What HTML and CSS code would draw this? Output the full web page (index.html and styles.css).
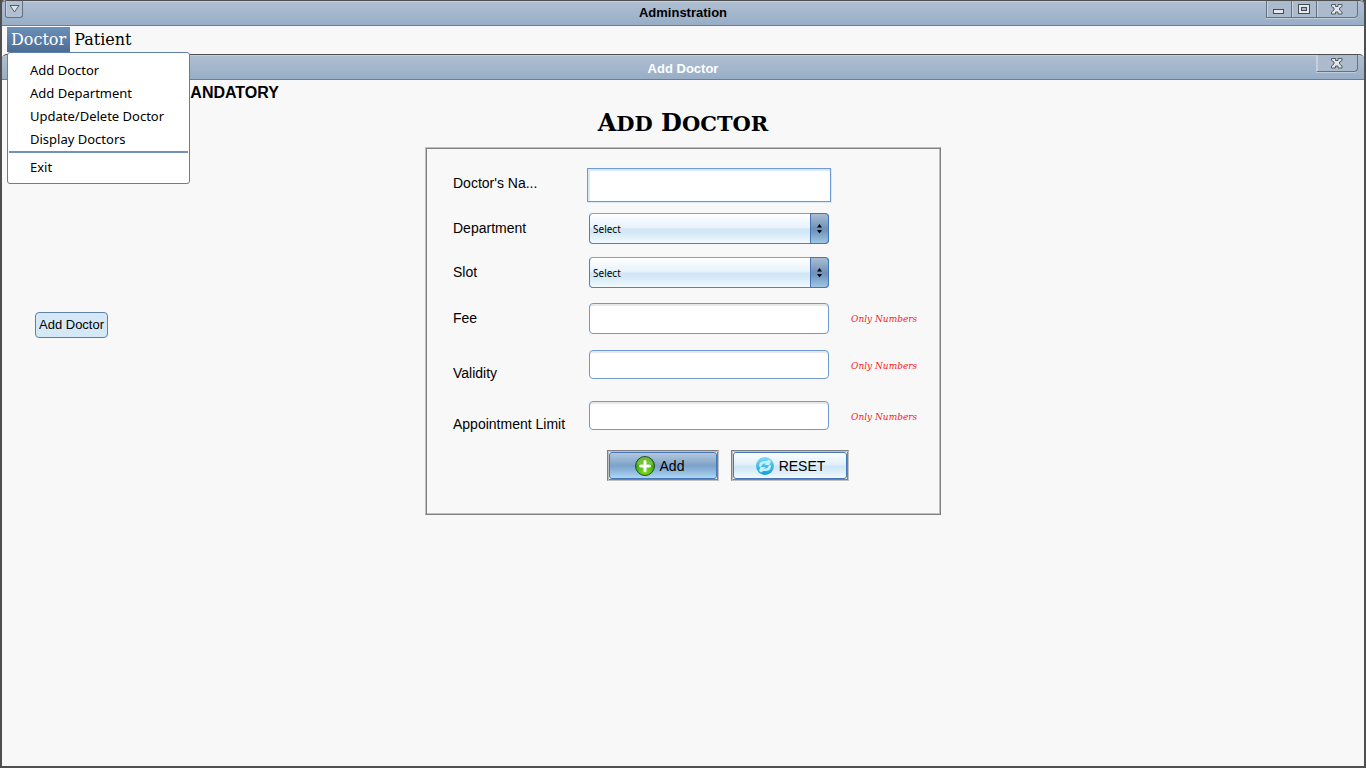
FILE: index.html
```html
<!DOCTYPE html>
<html lang="en">
<head>
<meta charset="utf-8">
<title>Adminstration</title>
<link rel="stylesheet" href="styles.css">
</head>
<body>
<div class="window">
  <header class="titlebar">
    <button class="win-menu" type="button" aria-label="Window menu">
      <svg width="11" height="10" viewBox="0 0 11 10"><path d="M1 1.500H10L5.500 8Z" fill="#dde2e7" stroke="#555d66"/></svg>
    </button>
    <h1 class="titlebar-text">Adminstration</h1>
    <div class="controls">
      <button class="control" type="button" aria-label="Minimize">
        <svg width="12" height="10" viewBox="0 0 12 10"><rect x=".5" y="5.500" width="10" height="4" fill="#e4e8ec" stroke="#454b52"/></svg>
      </button>
      <button class="control" type="button" aria-label="Maximize">
        <svg width="12" height="10" viewBox="0 0 12 10"><rect x=".5" y=".5" width="11" height="9" fill="#e4e8ec" stroke="#454b52"/><rect x="3.500" y="3.500" width="5" height="3" fill="#a5b6ca" stroke="#454b52"/></svg>
      </button>
      <button class="control control-close" type="button" aria-label="Close">
        <svg width="12" height="11" viewBox="0 0 12 11"><path d="M.5 .5H4.500V2.500H7V.5H11V2.500L8.500 4V6L11 8V10H7V8H4.500V10H.5V8L3 6V4L.5 2.500Z" fill="#e4e8ec" stroke="#555b62"/></svg>
      </button>
    </div>
  </header>

  <nav class="menubar">
    <div class="menu">
      <button class="menu-title menu-title-open" type="button" aria-expanded="true">Doctor</button>
      <div class="popup" role="menu">
        <button class="popup-item" type="button" role="menuitem">Add Doctor</button>
        <button class="popup-item" type="button" role="menuitem">Add Department</button>
        <button class="popup-item" type="button" role="menuitem">Update/Delete Doctor</button>
        <button class="popup-item" type="button" role="menuitem">Display Doctors</button>
        <hr class="popup-line">
        <button class="popup-item" type="button" role="menuitem">Exit</button>
      </div>
    </div>
    <div class="menu">
      <button class="menu-title" type="button">Patient</button>
    </div>
  </nav>

  <section class="frame">
    <header class="titlebar frame-titlebar">
      <h2 class="titlebar-text">Add Doctor</h2>
      <div class="controls">
        <button class="control control-close" type="button" aria-label="Close Add Doctor">
          <svg width="12" height="11" viewBox="0 0 12 11"><path d="M.5 .5H4.500V2.500H7V.5H11V2.500L8.500 4V6L11 8V10H7V8H4.500V10H.5V8L3 6V4L.5 2.500Z" fill="#e4e8ec" stroke="#555b62"/></svg>
        </button>
      </div>
    </header>
    <main class="content">
      <p class="mandatory">MANDATORY</p>
      <h3 class="heading">A<span class="small">DD</span> D<span class="small">OCTOR</span></h3>
      <form class="panel">
        <div class="fields">
          <label class="label" for="name">Doctor's Na...</label>
          <input class="field field-focus" id="name" type="text">
          <span></span>

          <label class="label" for="department">Department</label>
          <div class="combo">
            <select class="select" id="department"><option>Select</option></select>
            <span class="combo-arrow"><svg width="5" height="10" viewBox="0 0 5 10"><path d="M2.500 0L5 3.500H0ZM0 6H5L2.500 9.500Z" fill="#000"/></svg></span>
          </div>
          <span></span>

          <label class="label" for="slot">Slot</label>
          <div class="combo">
            <select class="select" id="slot"><option>Select</option></select>
            <span class="combo-arrow"><svg width="5" height="10" viewBox="0 0 5 10"><path d="M2.500 0L5 3.500H0ZM0 6H5L2.500 9.500Z" fill="#000"/></svg></span>
          </div>
          <span></span>

          <label class="label" for="fee">Fee</label>
          <input class="field" id="fee" type="text">
          <span class="note">Only Numbers</span>

          <label class="label label-low" for="validity">Validity</label>
          <input class="field field-short" id="validity" type="text">
          <span class="note">Only Numbers</span>

          <label class="label label-low" for="limit">Appointment Limit</label>
          <input class="field field-short" id="limit" type="text">
          <span class="note">Only Numbers</span>
        </div>
        <div class="actions">
          <button class="action action-add" type="button"><span class="action-face">
            <svg width="22" height="22" viewBox="0 0 22 22"><defs><radialGradient id="green" cx=".5" cy=".8" r=".8"><stop offset="0" stop-color="#8be01c"/><stop offset=".6" stop-color="#3fae14"/><stop offset="1" stop-color="#2d8a1c"/></radialGradient></defs><circle cx="11" cy="11" r="9.500" fill="url(#green)" stroke="#23502e"/><path d="M3 10A8 8 0 0 1 19 10Q11 7 3 10Z" fill="#b9e95a" opacity=".45"/><path d="M11 6.500V15.500M6.500 11H15.500" stroke="#fff" stroke-width="3" stroke-linecap="round"/></svg>
            Add</span></button>
          <button class="action action-reset" type="reset"><span class="action-face">
            <svg width="20" height="20" viewBox="0 0 20 20"><defs><linearGradient id="cyan" x2="0" y2="1"><stop offset="0" stop-color="#7ddcf5"/><stop offset="1" stop-color="#109fd8"/></linearGradient></defs><circle cx="10" cy="10" r="9" fill="url(#cyan)"/><path d="M4 10.500Q4 5 9.500 5H12L13.500 3.500 16 5 14.500 9H9.500L11 7.500Q7 7 6 11ZM16 9.500Q16 15 10.500 15H8L6.500 16.500 4 15 5.500 11H10.500L9 12.500Q13 13 14 9Z" fill="#c4eefa"/></svg>
            RESET</span></button>
        </div>
      </form>
      <span class="tooltip" role="tooltip">Add Doctor</span>
    </main>
  </section>
</div>
</body>
</html>
```
FILE: styles.css
```css
* { box-sizing: border-box; }

body {
  margin: 0;
  background: #4f4f4f;
  color: #000;
  font-family: "Liberation Sans", Arial, sans-serif;
  font-size: 14px;
}

button, input, select { font: inherit; color: inherit; margin: 0; }
h1, h2, h3, p { margin: 0; }
svg { display: block; flex: none; }

.window {
  display: flex;
  flex-direction: column;
  min-height: 100vh;
  border: 2px solid #4f4f4f;
  border-top: 0;
  border-radius: 5px 5px 0 0;
  background: #f8f8f8;
}

.titlebar {
  position: relative;
  display: flex;
  align-items: flex-start;
  justify-content: space-between;
  height: 26px;
  padding: 0 6px 0 3px;
  border-top: 1px solid #4f4f4f;
  border-bottom: 1px solid #5e81aa;
  border-radius: 5px 5px 0 0;
  background: linear-gradient(#b0bfd2, #98aec6);
  box-shadow: inset 0 1px #c3cfdd;
}

.frame-titlebar { color: #fff; }

.titlebar-text {
  position: absolute;
  inset: 0;
  font-size: 13px;
  line-height: 24px;
  text-align: center;
}

.frame-titlebar .titlebar-text { line-height: 28px; }

.win-menu {
  position: relative;
  display: flex;
  align-items: center;
  justify-content: center;
  width: 18px;
  height: 17px;
  padding: 0;
  border: 1px solid #66717e;
  border-top: 0;
  border-radius: 0 0 3px 3px;
  background: #b0bfd1;
  box-shadow: inset 1px 0 #c6d1dd;
}

.controls { position: relative; display: flex; margin-left: auto; }

.control {
  display: flex;
  align-items: center;
  justify-content: center;
  width: 25px;
  height: 17px;
  padding: 0;
  border: 0 solid #66717e;
  border-width: 0 0 1px 1px;
  background: #abbacd;
  box-shadow: inset 1px 0 #c6d1dd, 0 1px #c0ccda;
}

.control-close { width: 42px; border-right-width: 1px; border-radius: 0 0 4px 0; }
.frame-titlebar .control-close { border-left-color: #c6d1dd; }

.menubar { display: flex; height: 28px; padding: 1px 0 0 5px; }
.menu { position: relative; }

.menu-title {
  height: 25px;
  padding: 0 4px;
  border: 0;
  background: none;
  font-family: "DejaVu Serif", serif;
  font-size: 16px;
  line-height: 25px;
}

.menu-title-open { background: linear-gradient(#6b90b9, #4b6d94); color: #fff; }

.popup {
  position: absolute;
  z-index: 2;
  top: 25px;
  left: 0;
  width: 183px;
  padding: 6px 1px 4px;
  border: 1px solid #5e81aa;
  border-radius: 3px;
  background: #fff;
}

.popup-item {
  display: block;
  width: 100%;
  height: 23px;
  padding: 0 0 0 21px;
  border: 0;
  background: none;
  font-family: "Noto Sans", sans-serif;
  font-size: 13px;
  line-height: 23px;
  text-align: left;
}

.popup-line { height: 2px; margin: 0 0 3px; border: 0; background: #7292b8; }

.frame { display: flex; flex: 1; flex-direction: column; }

.content {
  position: relative;
  display: flex;
  flex: 1;
  flex-direction: column;
  align-items: center;
}

.mandatory {
  align-self: flex-start;
  padding-left: 175px;
  font-size: 16px;
  font-weight: bold;
  line-height: 26px;
}

.heading {
  margin: 2px 0 8px;
  font-family: "DejaVu Serif", serif;
  font-size: 24px;
  line-height: 30px;
}

.heading .small { font-size: 21px; }

.panel {
  width: 516px;
  max-width: 100%;
  padding: 20px 18px 33px 27px;
  border: 1px solid;
  border-color: #c0c0c0 #808080 #808080 #c0c0c0;
  box-shadow: inset 1px 1px #808080, inset -1px -1px #c0c0c0;
}

.fields {
  display: grid;
  grid-template-columns: 136px 240px auto;
  grid-template-rows: 45px 44px 46px 47px 51px 49px;
  align-items: start;
}

.label { line-height: 30px; }
.label-low { line-height: 46px; }

.field {
  width: 100%;
  height: 31px;
  padding: 0 6px;
  border: 1px solid #6f99cf;
  border-radius: 4px;
  background: #fff;
  box-shadow: inset 0 2px 1px #e8e8e8;
}

.field-short { height: 29px; }

.field-focus {
  width: 244px;
  height: 34px;
  margin-left: -2px;
  border-radius: 0;
  box-shadow: inset 1px 1px 1px 1px #d9e8f7, 1px 1px #dbe9f7;
}

.combo { position: relative; height: 31px; }

.select {
  width: 100%;
  height: 31px;
  padding: 0 20px 0 3px;
  border: 1px solid #5580bd;
  border-top-color: #7ea2d2;
  border-radius: 4px;
  background: linear-gradient(#fff, #e6f2fa 48%, #d0e6f5 52%, #d3e9f7 65%, #f2fafe);
  appearance: none;
  font-family: "Noto Sans", sans-serif;
  font-size: 10px;
}

.combo-arrow {
  position: absolute;
  inset: 0 0 0 auto;
  display: flex;
  align-items: center;
  justify-content: center;
  width: 19px;
  border: 1px solid #4474b8;
  border-radius: 0 4px 4px 0;
  background: linear-gradient(#abbdd2, #6e92b9 50%, #7297bf 60%, #9fc6e4);
  pointer-events: none;
}

.note {
  padding-left: 22px;
  color: #fb1a22;
  font-family: "DejaVu Serif", serif;
  font-size: 9px;
  font-style: italic;
  line-height: 32px;
  white-space: nowrap;
}

.actions { display: flex; gap: 12px; padding-left: 154px; }

.action {
  height: 31px;
  padding: 1px;
  border: 1px solid;
  border-color: #808080 #c0c0c0 #c0c0c0 #808080;
  background: #f8f8f8;
  box-shadow: inset 1px 1px #c0c0c0, inset -1px -1px #808080;
}

.action-add { width: 112px; }
.action-reset { width: 118px; }

.action-face {
  display: flex;
  align-items: center;
  justify-content: center;
  gap: 4px;
  height: 27px;
  border: 1px solid #4676bc;
  border-radius: 3px;
}

.action-add .action-face { padding-right: 8px; background: linear-gradient(#b5c8dd, #7da2ca 50%, #82aad1 60%, #acd6f3); }
.action-reset .action-face { background: linear-gradient(#fafdff, #e2f0f9 45%, #d0e6f5 52%, #d4eaf8 65%, #f2fafe); }

.tooltip {
  position: absolute;
  top: 232px;
  left: 33px;
  padding: 0 3px;
  border: 1px solid #5e81aa;
  border-radius: 4px;
  background: #d5e8f7;
  font-size: 13px;
  line-height: 24px;
}
```
